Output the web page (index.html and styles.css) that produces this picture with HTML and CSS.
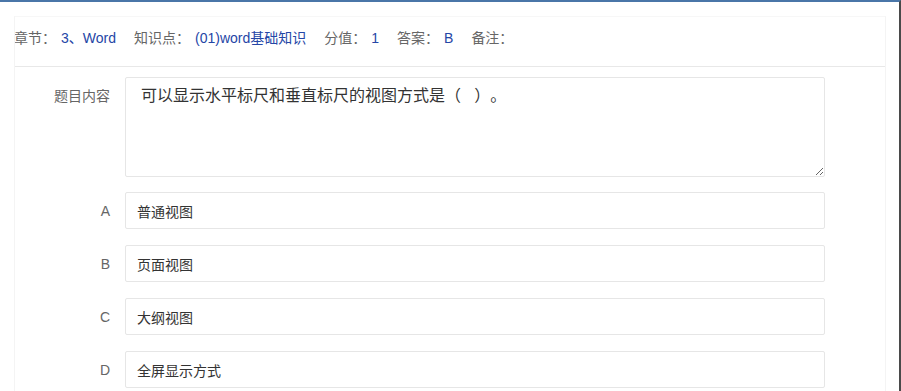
FILE: index.html
```html
<!DOCTYPE html>
<html lang="zh">
<head>
<meta charset="utf-8">
<link rel="stylesheet" href="styles.css">
</head>
<body>
<div class="frame">
  <div class="card">
    <div class="meta">
      <span class="item"><span class="lbl">章节：</span><span class="val">3、Word</span></span>
      <span class="item"><span class="lbl">知识点：</span><span class="val">(01)word基础知识</span></span>
      <span class="item"><span class="lbl">分值：</span><span class="val">1</span></span>
      <span class="item"><span class="lbl">答案：</span><span class="val">B</span></span>
      <span class="item"><span class="lbl">备注：</span><span class="val"></span></span>
    </div>
    <div class="form">
      <div class="row">
        <div class="label label-top">题目内容</div>
        <textarea class="question" readonly>可以显示水平标尺和垂直标尺的视图方式是（   ）。</textarea>
      </div>
      <div class="row">
        <div class="label">A</div>
        <div class="option">普通视图</div>
      </div>
      <div class="row">
        <div class="label">B</div>
        <div class="option">页面视图</div>
      </div>
      <div class="row">
        <div class="label">C</div>
        <div class="option">大纲视图</div>
      </div>
      <div class="row">
        <div class="label">D</div>
        <div class="option">全屏显示方式</div>
      </div>
    </div>
  </div>
</div>
</body>
</html>
```
FILE: styles.css
```css
* { box-sizing: border-box; }
html, body {
  margin: 0;
  padding: 0;
  background: #fff;
  height: 100%;
  overflow: hidden;
}
body {
  font-family: "Liberation Sans", Arial, "Noto Sans CJK SC", sans-serif;
  color: #333;
  text-spacing-trim: space-all;
}
.frame {
  width: 901px;
  height: 391px;
  border-top: 2px solid #4a76a8;
  border-right: 2px solid #4a4a4a;
  padding: 14px 0 0 14px;
  overflow: hidden;
}
.card {
  width: 872px;
  height: 375px;
  border-left: 1px solid #f4f4f4;
  border-right: 1px solid #f4f4f4;
  border-top: 1px solid #f7f7f7;
  overflow: hidden;
}
.meta {
  height: 50px;
  padding: 11px 0 0 0;
  margin-left: -1px;
  border-bottom: 1px solid #e8e8e8;
  font-size: 14px;
  line-height: 20px;
  display: flex;
}
.item {
  display: flex;
  gap: 5px;
  margin-right: 18px;
}
.lbl { color: #666; }
.val { color: #2546a6; }
.form {
  padding-top: 10px;
}
.row {
  display: flex;
  align-items: center;
  margin-bottom: 16px;
}
.row:first-child {
  align-items: flex-start;
  margin-bottom: 15px;
}
.label {
  width: 110px;
  padding-right: 15px;
  text-align: right;
  font-size: 14px;
  color: #666;
  line-height: 20px;
}
.label-top {
  padding-top: 9px;
}
.question {
  width: 700px;
  height: 100px;
  border: 1px solid #e6e6e6;
  border-radius: 2px;
  padding: 6px 15px;
  font-family: "Liberation Sans", Arial, "Noto Sans CJK SC", sans-serif;
  font-size: 16px;
  line-height: 24px;
  color: #333;
  margin: 0;
  outline: none;
  resize: vertical;
  white-space: pre-wrap;
  text-spacing-trim: space-all;
}
.option {
  width: 700px;
  height: 37px;
  border: 1px solid #e6e6e6;
  border-radius: 2px;
  padding: 0 11px;
  display: flex;
  align-items: center;
  font-size: 14px;
  color: #333;
}
```
